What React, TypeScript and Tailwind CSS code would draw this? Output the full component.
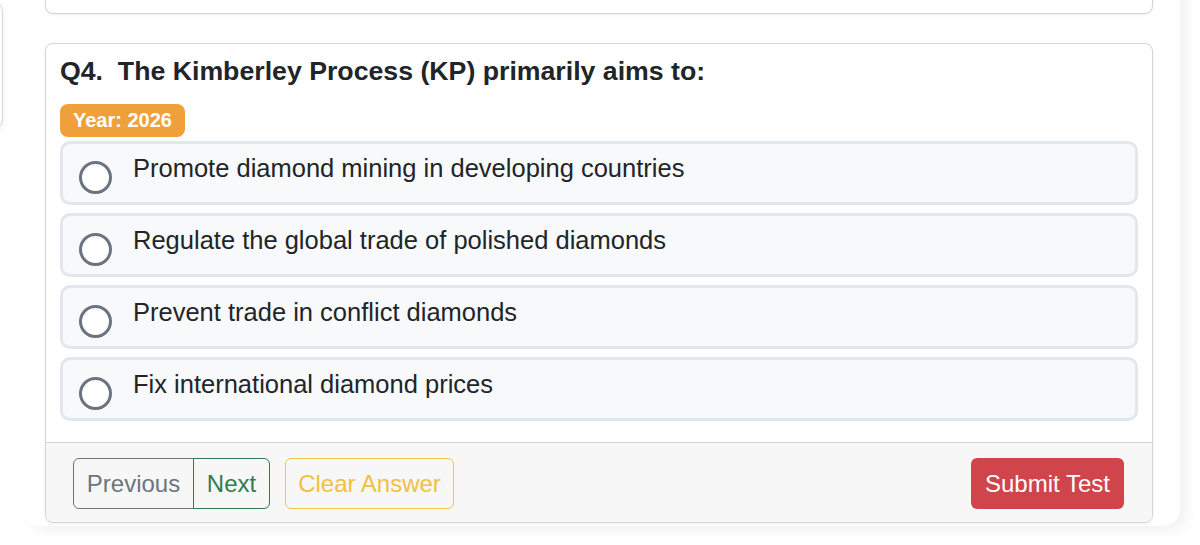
import React from "react";

const options = [
  "Promote diamond mining in developing countries",
  "Regulate the global trade of polished diamonds",
  "Prevent trade in conflict diamonds",
  "Fix international diamond prices",
];

export default function App() {
  return (
    <div
      className="w-[1200px] h-[545px] overflow-hidden bg-white flex items-start text-[#212529]"
      style={{ fontFamily: '"Liberation Sans", Arial, Helvetica, sans-serif' }}
    >
      <div className="shrink-0 w-[300px] -ml-[297px] h-[131px] border border-[#d6d6d6] rounded-xl bg-white shadow-[0_2px_8px_rgba(0,0,0,0.06)]" />
      <div className="shrink-0 ml-[20px] w-[1157px] -mt-[100px] bg-white rounded-b-2xl shadow-[6px_4px_14px_rgba(0,0,0,0.06)] pl-[22px] pr-[27px] pb-[3px]">
        <div className="h-[114px] border border-[#d4d4d4] rounded-b-lg bg-white shadow-[0_1px_3px_rgba(0,0,0,0.06)] mb-[29px]" />
        <div className="border border-[#d4d4d4] rounded-lg overflow-hidden bg-white shadow-[0_1px_3px_rgba(0,0,0,0.06)]">
          <div className="px-[14px] pt-[13px] pb-[21px]">
            <div className="text-[26.7px] font-bold leading-[29px] text-[#212529] whitespace-pre">
              {"Q4.  The Kimberley Process (KP) primarily aims to:"}
            </div>
            <div className="mt-[18px] inline-block h-[33px] px-[13px] rounded-lg bg-[#f0a03b] text-white font-bold text-[20px] leading-[33px]">
              Year: 2026
            </div>
            <div className="mt-[4px] flex flex-col gap-2">
              {options.map((o) => (
                <div
                  key={o}
                  className="h-[64px] rounded-[10px] border-[3px] border-[#e2e7ee] bg-[#f8f9fb] flex items-start pl-[16px] pt-[6px]"
                >
                  <div className="shrink-0 mt-[11px] w-[33px] h-[33px] rounded-full border-[3px] border-[#6b7280] bg-white" />
                  <div className="ml-[21px] text-[25.5px] leading-[36px] text-[#212529]">{o}</div>
                </div>
              ))}
            </div>
          </div>
          <div className="border-t border-[#d4d4d4] bg-[#f7f7f7] pl-[27px] pr-[28px] pt-[15px] pb-[13px] flex items-center justify-between">
            <div className="flex items-center">
              <div className="flex">
                <button className="w-[121px] h-[51px] border border-[#6c757d] text-[#6c757d] rounded-l-md text-[24px] leading-[49px] text-center">
                  Previous
                </button>
                <button className="w-[77px] h-[51px] -ml-px border border-[#2e7d4f] text-[#2e7d4f] rounded-r-md text-[24px] leading-[49px] text-center">
                  Next
                </button>
              </div>
              <button className="ml-[15px] w-[169px] h-[51px] border border-[#f3c64b] text-[#f2c040] rounded-md text-[24px] leading-[49px] text-center">
                Clear Answer
              </button>
            </div>
            <button className="w-[153px] h-[51px] bg-[#d0444c] text-white rounded-md text-[24px] leading-[51px] text-center">
              Submit Test
            </button>
          </div>
        </div>
      </div>
    </div>
  );
}
